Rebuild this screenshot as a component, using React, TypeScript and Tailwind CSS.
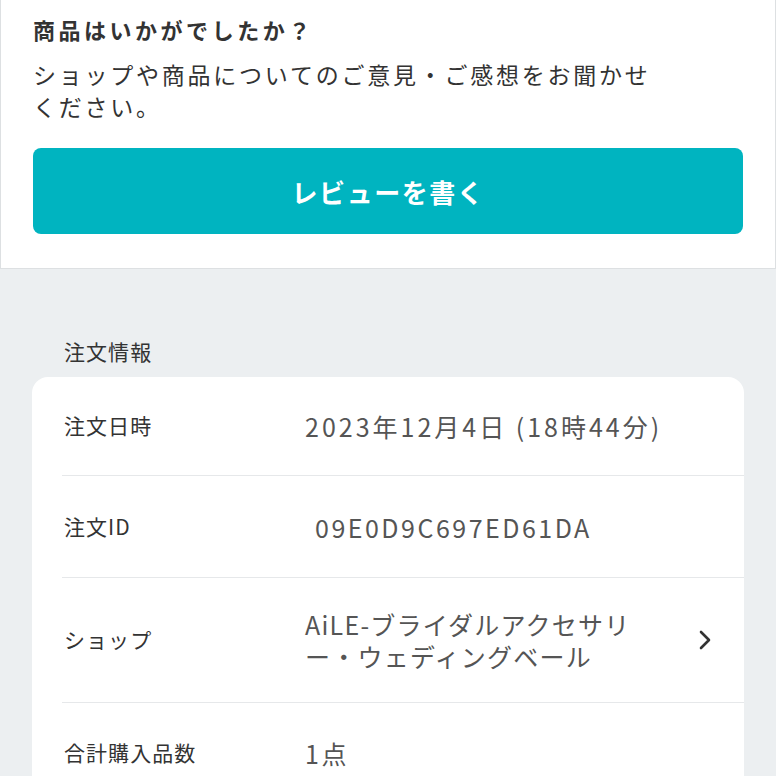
const rows = [
  { label: '注文日時', value: '2023年12月4日 (18時44分)', h: 'h-[99px]', track: 'tracking-[0.12em]' },
  { label: '注文ID', value: '09E0D9C697ED61DA', h: 'h-[102px]', track: 'tracking-[0.1em]', indent: true },
  { label: 'ショップ', value: 'AiLE-ブライダルアクセサリー・ウェディングベール', h: 'h-[125px]', track: 'tracking-[0.05em]', link: true },
  { label: '合計購入品数', value: '1点', h: 'h-[100px]', track: 'tracking-[0.1em]', last: true },
]

function Chevron() {
  return (
    <svg width="16" height="22" viewBox="0 0 16 22" fill="none" className="shrink-0">
      <path d="M4 3l8 8-8 8" stroke="#333" strokeWidth="2.6" strokeLinecap="round" strokeLinejoin="round" />
    </svg>
  )
}

export default function App() {
  return (
    <div className="w-[776px] min-h-[776px] bg-[#eceff1] font-['Noto_Sans_CJK_JP',sans-serif] text-[#333]">
      <section className="bg-white border-x border-b border-[#dde0e2] px-8 pt-[14px] pb-[34px]">
        <h2 className="text-[22px] leading-[30px] font-bold tracking-[0.16em]">商品はいかがでしたか？</h2>
        <p className="mt-[14px] w-[636px] text-[23px] leading-[32px] tracking-[0.12em]">
          ショップや商品についてのご意見・ご感想をお聞かせください。
        </p>
        <button className="mt-[26px] h-[86px] w-full rounded-[8px] bg-[#00b4c0] text-[26px] font-bold tracking-[0.06em] text-white">
          レビューを書く
        </button>
      </section>

      <div className="px-8 pt-[68px]">
        <h3 className="pl-8 text-[21px] leading-[28px] tracking-[0.05em]">注文情報</h3>
        <div className="mt-[12px] rounded-t-[16px] bg-white pl-[30px]">
          {rows.map(r => (
            <div
              key={r.label}
              className={`flex items-center ${r.h} ${r.last ? '' : 'border-b border-[#e6e8ea]'}`}
            >
              <div className="w-[243px] shrink-0 pl-[2px] text-[21px] tracking-[0.05em]">{r.label}</div>
              <div
                className={`flex-1 text-[25px] leading-[32px] text-[#555] ${r.track} ${r.indent ? 'pl-[10px]' : ''} ${r.link ? 'max-w-[340px]' : ''}`}
              >
                {r.value}
              </div>
              {r.link && (
                <div className="ml-auto mr-[31px]">
                  <Chevron />
                </div>
              )}
            </div>
          ))}
        </div>
      </div>
    </div>
  )
}
